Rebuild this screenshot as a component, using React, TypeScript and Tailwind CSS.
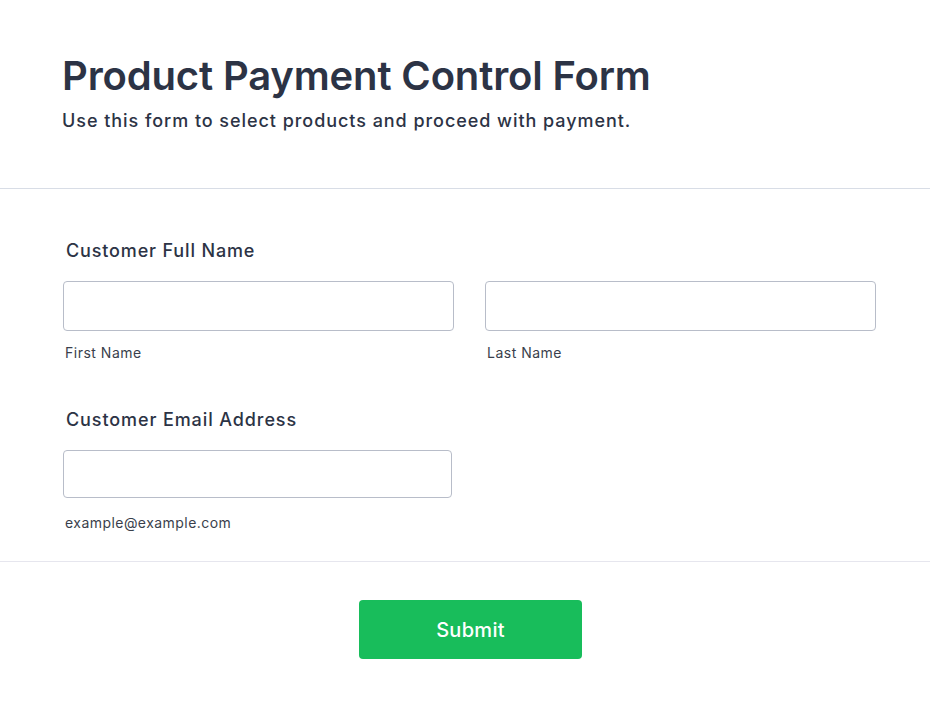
export default function App() {
  return (
    <div className="min-h-[708px] bg-white text-[#2c3345]" style={{ fontFamily: "Inter, 'Noto Sans', sans-serif" }}>
      {/* Header */}
      <div className="px-[62px] pt-[52px] pb-[55px] border-b border-[#d8dde6]">
        <h1 className="text-[40px] leading-[48px] font-semibold tracking-[-0.15px]">Product Payment Control Form</h1>
        <p className="mt-[9px] text-[18px] leading-[24px] font-medium tracking-[0.95px]">
          Use this form to select products and proceed with payment.
        </p>
      </div>

      {/* Fields */}
      <div className="px-[63px] pt-[50px] pb-[28px] border-b border-[#e6e6ee]">
        <label className="block pl-[3px] text-[18px] leading-[24px] font-medium tracking-[0.85px]">Customer Full Name</label>
        <div className="mt-[18px] grid grid-cols-2 gap-[31px] w-[813px]">
          <div>
            <input className="block w-full h-[50px] rounded-[4px] border border-[#b8bdc9] bg-white outline-none" />
            <span className="mt-[12px] block pl-[2px] text-[14px] leading-[20px] tracking-[0.5px] text-[#3a3f4c]">First Name</span>
          </div>
          <div>
            <input className="block w-full h-[50px] rounded-[4px] border border-[#b8bdc9] bg-white outline-none" />
            <span className="mt-[12px] block pl-[2px] text-[14px] leading-[20px] tracking-[0.5px] text-[#3a3f4c]">Last Name</span>
          </div>
        </div>

        <label className="mt-[45px] block pl-[3px] text-[18px] leading-[24px] font-medium tracking-[0.9px]">Customer Email Address</label>
        <div className="mt-[18px] w-[389px]">
          <input className="block w-full h-[48px] rounded-[4px] border border-[#b8bdc9] bg-white outline-none" />
          <span className="mt-[15px] block pl-[2px] text-[14px] leading-[20px] tracking-[0.45px] text-[#3a3f4c]">example@example.com</span>
        </div>
      </div>

      {/* Submit */}
      <div className="flex justify-center pt-[38px] pb-[50px]">
        <button className="w-[223px] h-[59px] rounded-[4px] bg-[#18bd5b] text-white text-[20px] font-medium tracking-[0.3px] ml-[11px]">
          Submit
        </button>
      </div>
    </div>
  );
}
